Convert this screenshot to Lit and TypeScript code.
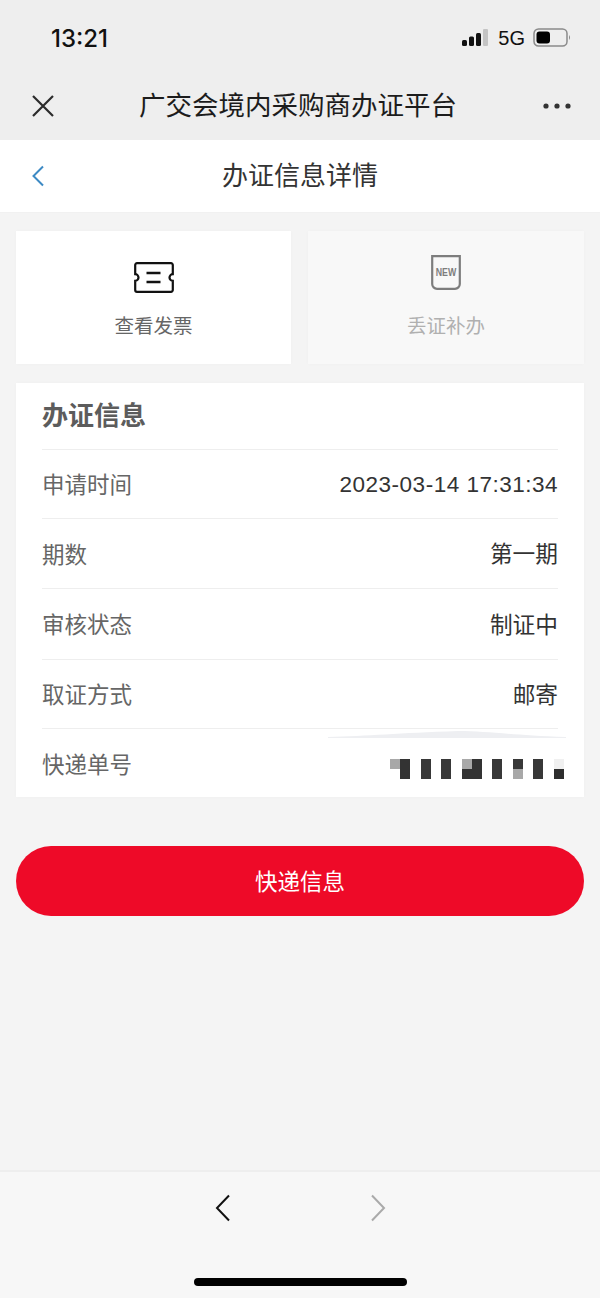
import { LitElement, html, css, svg } from "lit";
import { customElement } from "lit/decorators.js";

const rows: [string, string][] = [
  ["申请时间", "2023-03-14 17:31:34"],
  ["期数", "第一期"],
  ["审核状态", "制证中"],
  ["取证方式", "邮寄"],
];

const mosaic: [number, number, number, number, string][] = [
  [0, 0, 10, 10, "#a8a8a8"],
  [10, 0, 10, 20, "#333"],
  [31, 0, 10, 20, "#383838"],
  [51, 0, 10, 20, "#383838"],
  [72, 0, 20, 20, "#333"],
  [72, 0, 10, 10, "#a8a8a8"],
  [102, 0, 10, 20, "#383838"],
  [123, 0, 10, 10, "#383838"],
  [123, 10, 10, 10, "#a8a8a8"],
  [143, 0, 10, 20, "#383838"],
  [164, 0, 10, 10, "#f0f0f0"],
  [164, 10, 10, 10, "#2e2e2e"],
];

@customElement("app-root")
export class AppRoot extends LitElement {
  static styles = css`
    :host {
      display: block;
      width: 600px;
      height: 1298px;
      background: #f4f4f4;
      font-family: "Liberation Sans", "Noto Sans CJK SC", sans-serif;
      color: #333;
      overflow: hidden;
    }
    .page { display: flex; flex-direction: column; height: 1298px; }
    .chrome { height: 140px; background: #eeeeee; flex: none; display: flex; flex-direction: column; }
    .status { height: 72px; display: flex; align-items: center; justify-content: space-between; padding: 4px 28px 0 51px; box-sizing: border-box; }
    .time { font-size: 24px; font-weight: 500; color: #111; font-family: Inter, "Liberation Sans", sans-serif; }
    .indicators { display: flex; align-items: center; gap: 8px; }
    .net { font-size: 20px; color: #111; font-family: "Liberation Sans", sans-serif; margin-left: 2px; }
    .nav { height: 68px; display: flex; align-items: center; justify-content: space-between; padding: 0 29px 1px 31px; box-sizing: border-box; }
    .nav-title { font-size: 26.5px; color: #1c1c1c; line-height: 34px; margin-right: 2px; }
    .sub { height: 72px; background: #fff; flex: none; display: flex; align-items: center; justify-content: center; position: relative; box-shadow: 0 1px 1px #f1f1f1; }
    .sub svg { position: absolute; left: 31px; top: 25px; }
    .sub-title { font-size: 26px; color: #333; line-height: 34px; }
    .content { padding: 19px 16px 0; display: flex; flex-direction: column; }
    .cards { display: grid; grid-template-columns: 275px 276px; gap: 17px; height: 133px; }
    .tile { background: #fff; display: flex; flex-direction: column; align-items: center; box-shadow: 0 0 2px #f0f0f0; }
    .tile.off { background: #f8f8f8; }
    .ic { height: 74px; box-sizing: border-box; display: flex; align-items: flex-end; justify-content: center; }
    .ic.ticket { padding-bottom: 12px; }
    .ic.new { padding-bottom: 15px; }
    .lbl { margin-top: 8px; font-size: 19.5px; line-height: 26px; color: #666; }
    .tile.off .lbl { color: #b0b0b0; }
    .info { margin-top: 19px; background: #fff; height: 414px; padding: 0 26px; display: flex; flex-direction: column; box-sizing: border-box; box-shadow: 0 0 2px #f0f0f0; }
    .info-title { height: 67px; flex: none; display: flex; align-items: center; font-size: 26px; font-weight: 700; color: #5c5c5c; border-bottom: 1px solid #eeeeee; box-sizing: border-box; padding-bottom: 6px; }
    .row { height: 70px; flex: none; display: flex; align-items: center; justify-content: space-between; border-bottom: 1px solid #eeeeee; box-sizing: border-box; font-size: 22.5px; position: relative; padding-bottom: 2px; }
    .row:nth-child(2) { height: 69px; }
    .row:nth-child(4) { height: 71px; }
    .row:nth-child(5) { height: 69px; }
    .row:last-child { height: 69px; border-bottom: none; }
    .k { color: #666; }
    .v { color: #333; font-size: 22.7px; }
    .v.num { font-family: "Liberation Sans", sans-serif; font-size: 22.5px; letter-spacing: 0.5px; padding-top: 3px; }
    .smear { position: absolute; top: -1px; right: -8px; }
    .mosaic { display: block; margin-right: -6px; margin-top: 12px; }
    .btn { margin-top: 49px; height: 70px; border-radius: 35px; background: #ee0a28; color: #fff; display: flex; align-items: center; justify-content: center; font-size: 22.5px; padding-bottom: 3px; box-sizing: border-box; }
    .spacer { flex: 1; }
    .bottom { height: 128px; flex: none; background: #f7f7f7; border-top: 2px solid #eeeeee; box-sizing: border-box; display: flex; flex-direction: column; align-items: center; }
    .arrows { display: flex; justify-content: center; gap: 139px; margin-top: 22px; height: 30px; padding-left: 1px; }
    .home { width: 213px; height: 8px; border-radius: 4px; background: #000; margin-top: 54px; }
  `;

  render() {
    return html`<div class="page">
      <div class="chrome">
        <div class="status">
          <span class="time">13:21</span>
          <div class="indicators">
            <svg width="26" height="18" viewBox="0 0 26 18">
              <rect x="0" y="11" width="5" height="6" rx="1.5" fill="#111"/>
              <rect x="7" y="7.5" width="5" height="9.5" rx="1.5" fill="#111"/>
              <rect x="14" y="4" width="5" height="13" rx="1.5" fill="#111"/>
              <rect x="21" y="0" width="5" height="17" rx="1" fill="#c4c4c4"/>
            </svg>
            <span class="net">5G</span>
            <svg width="39" height="20" viewBox="0 0 39 20">
              <rect x="1" y="1" width="33" height="17" rx="4.5" fill="none" stroke="#8a8a8a" stroke-width="1.5"/>
              <rect x="3.5" y="3.5" width="13.5" height="12" rx="3" fill="#000"/>
              <path d="M36 7 q2 2.5 0 5 z" fill="#8a8a8a"/>
            </svg>
          </div>
        </div>
        <div class="nav">
          <svg width="24" height="24" viewBox="0 0 24 24"><path d="M2 2 L22 22 M22 2 L2 22" stroke="#2b2b2b" stroke-width="2.2" fill="none"/></svg>
          <span class="nav-title">广交会境内采购商办证平台</span>
          <svg width="28" height="8" viewBox="0 0 28 8"><circle cx="3" cy="4" r="2.6" fill="#333"/><circle cx="14" cy="4" r="2.6" fill="#333"/><circle cx="25" cy="4" r="2.6" fill="#333"/></svg>
        </div>
      </div>
      <div class="sub">
        <svg width="15" height="22" viewBox="0 0 15 22"><path d="M12 1.5 L2.5 11 L12 20.5" stroke="#3d8ac4" stroke-width="2" fill="none"/></svg>
        <span class="sub-title">办证信息详情</span>
      </div>
      <div class="content">
        <div class="cards">
          <div class="tile">
            <div class="ic ticket">
              <svg width="40" height="31" viewBox="0 0 40 31">
                <path d="M3 1.2 H37 a1.8 1.8 0 0 1 1.8 1.8 V12.2 a3.3 3.3 0 0 0 0 6.6 V28 a1.8 1.8 0 0 1 -1.8 1.8 H3 a1.8 1.8 0 0 1 -1.8 -1.8 V18.8 a3.3 3.3 0 0 0 0 -6.6 V3 a1.8 1.8 0 0 1 1.8 -1.8 Z" fill="none" stroke="#111" stroke-width="2.2"/>
                <path d="M12.5 11 H26.5 M12.5 20 H26.5" stroke="#111" stroke-width="2.6"/>
              </svg>
            </div>
            <span class="lbl">查看发票</span>
          </div>
          <div class="tile off">
            <div class="ic new">
              <svg width="30" height="35" viewBox="0 0 30 35">
                <path d="M1.2 1.2 H28.8 V29 a4.8 4.8 0 0 1 -4.8 4.8 H6 a4.8 4.8 0 0 1 -4.8 -4.8 Z" fill="none" stroke="#7d7d7d" stroke-width="2.2"/>
                <text x="4.7" y="20.8" textLength="20.5" lengthAdjust="spacingAndGlyphs" font-size="10.7" font-weight="700" fill="#7d7d7d" font-family="Liberation Sans, sans-serif">NEW</text>
              </svg>
            </div>
            <span class="lbl">丢证补办</span>
          </div>
        </div>
        <div class="info">
          <div class="info-title">办证信息</div>
          ${rows.map(
            ([k, v], i) => html`<div class="row">
              <span class="k">${k}</span>
              <span class="v ${i === 0 ? "num" : ""}">${v}</span>
            </div>`
          )}
          <div class="row">
            <svg class="smear" width="238" height="12" viewBox="0 0 238 12">
              <path d="M0 9 C40 8 70 5 130 3 C160 3 180 7 238 9 L238 10 L0 10 Z" fill="#eeeff2"/>
            </svg>
            <span class="k">快递单号</span>
            <svg class="mosaic" width="174" height="20" viewBox="0 0 174 20">
              ${mosaic.map(
                ([x, y, w, h, c]) => svg`<rect x=${x} y=${y} width=${w} height=${h} fill=${c}></rect>`
              )}
            </svg>
          </div>
        </div>
        <div class="btn">快递信息</div>
      </div>
      <div class="spacer"></div>
      <div class="bottom">
        <div class="arrows">
          <svg width="16" height="28" viewBox="0 0 16 28"><path d="M14 1.5 L2 14 L14 26.5" stroke="#111" stroke-width="2" fill="none"/></svg>
          <svg width="16" height="28" viewBox="0 0 16 28"><path d="M2 1.5 L14 14 L2 26.5" stroke="#aaa" stroke-width="2" fill="none"/></svg>
        </div>
        <div class="home"></div>
      </div>
    </div>`;
  }
}
